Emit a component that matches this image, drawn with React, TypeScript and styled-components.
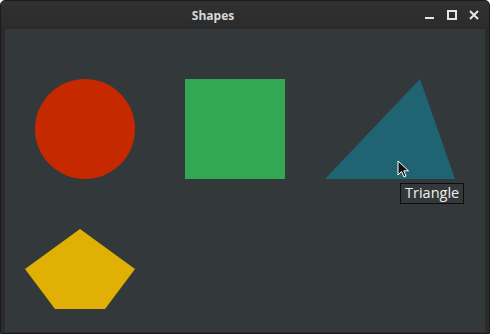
import React from 'react'
import styled, { createGlobalStyle } from 'styled-components'

const GlobalStyle = createGlobalStyle`
  html, body {
    margin: 0;
    padding: 0;
    background: #ffffff;
  }
  body {
    font-family: "Open Sans", "DejaVu Sans", sans-serif;
  }
`

function App() {
  return (
    <>
      <GlobalStyle />
      <Window>
        {/* Title bar */}
        <TitleBar>
          <Title>Shapes</Title>
          <Controls>
            <ControlButton aria-label="minimize">
              <svg width="10" height="10" viewBox="0 0 10 10">
                <rect x="0" y="7" width="9" height="2" fill="#e6e6e6" />
              </svg>
            </ControlButton>
            <ControlButton aria-label="maximize">
              <svg width="10" height="10" viewBox="0 0 10 10">
                <rect x="1" y="1" width="8" height="8" fill="none" stroke="#e6e6e6" strokeWidth="2" />
              </svg>
            </ControlButton>
            <ControlButton aria-label="close">
              <svg width="10" height="10" viewBox="0 0 10 10">
                <path d="M1 1 L9 9 M9 1 L1 9" stroke="#e6e6e6" strokeWidth="2" />
              </svg>
            </ControlButton>
          </Controls>
        </TitleBar>
        {/* Drawing canvas */}
        <Canvas>
          <svg width="480" height="303" viewBox="0 0 480 303">
            <g transform="translate(-5 -29)">
              <circle cx="85" cy="129" r="50" fill="#c62800" />
              <rect x="185" y="79" width="100" height="100" fill="#33a854" />
              <polygon points="420,79 455,179 325,179" fill="#206474" />
              <polygon points="80,229 135,269 105,309 55,309 25,269" fill="#e0b104" />
            </g>
          </svg>
          <Cursor>
            <svg width="14" height="20" viewBox="0 0 14 20">
              <path d="M1 1 L1 15 L4.5 11.5 L7 17 L9 16 L6.8 10.8 L11.5 10.8 Z" fill="#111" stroke="#fff" strokeWidth="1" strokeLinejoin="round" />
            </svg>
          </Cursor>
          <Tooltip>Triangle</Tooltip>
        </Canvas>
      </Window>
    </>
  )
}

const Window = styled.div`
  width: 490px;
  height: 334px;
  box-sizing: border-box;
  display: flex;
  flex-direction: column;
  background: #2b2b2b;
  border: 1px solid #1c1c1c;
  border-radius: 5px 5px 0 0;
  padding: 0 4px 1px 4px;
  overflow: hidden;
`
const TitleBar = styled.div`
  height: 28px;
  flex: none;
  display: flex;
  align-items: center;
  position: relative;
  margin: 0 -4px;
  background: linear-gradient(#313131, #2b2b2b);
`
const Title = styled.div`
  flex: 1;
  text-align: center;
  font-family: "Open Sans", "DejaVu Sans", sans-serif;
  font-weight: 700;
  font-size: 12px;
  color: #d8d8d8;
`
const Controls = styled.div`
  display: flex;
  align-items: center;
  gap: 12px;
  padding-right: 10px;
`
const ControlButton = styled.div`
  width: 10px;
  height: 10px;
  display: flex;
  > svg {
    display: block;
  }
`
const Canvas = styled.div`
  flex: 1;
  position: relative;
  background: #33393b;
  > svg {
    display: block;
  }
`
const Cursor = styled.div`
  position: absolute;
  left: 392px;
  top: 131px;
  line-height: 0;
`
const Tooltip = styled.div`
  position: absolute;
  left: 395px;
  top: 154px;
  height: 21px;
  padding: 0 4px;
  box-sizing: border-box;
  display: flex;
  align-items: center;
  background: #33393b;
  border: 1px solid #0e0e0e;
  color: #eeeeec;
  font-family: "Open Sans", "DejaVu Sans", sans-serif;
  font-size: 14.5px;
  line-height: 1;
`

export default App
